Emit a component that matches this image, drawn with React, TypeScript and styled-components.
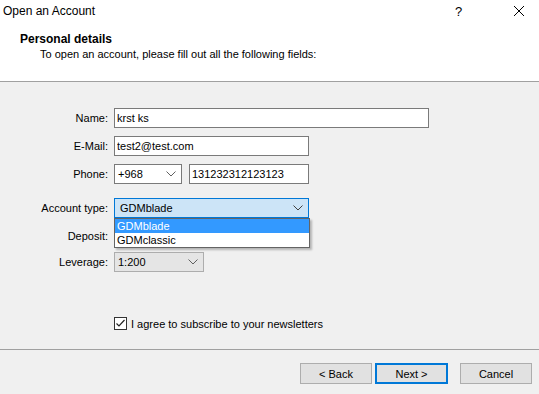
import styled, { createGlobalStyle } from "styled-components";

const Global = createGlobalStyle`
  html, body {
    margin: 0;
    padding: 0;
    background: #f0f0f0;
  }
  * { box-sizing: border-box; }
`;

const Chevron = ({ color = "#606060" }: { color?: string }) => (
  <svg width="10" height="6" viewBox="0 0 10 6">
    <path d="M0.5 0.5 L5 5 L9.5 0.5" fill="none" stroke={color} strokeWidth="1" />
  </svg>
);

export default function App() {
  return (
    <Window>
      <Global />
      <Header>
        <TitleBar>
          <WinTitle>Open an Account</WinTitle>
          <Help>?</Help>
          <Close>
            <svg width="12" height="12" viewBox="0 0 12 12">
              <path d="M1 1 L11 11 M11 1 L1 11" stroke="#000" strokeWidth="1" />
            </svg>
          </Close>
        </TitleBar>
        <Heading>Personal details</Heading>
        <Sub>To open an account, please fill out all the following fields:</Sub>
      </Header>

      <Form>
        <Row $space={0}>
          <Label>Name:</Label>
          <Input $w={315} defaultValue="krst ks" />
        </Row>
        <Row $space={8}>
          <Label>E-Mail:</Label>
          <Input $w={195} defaultValue="test2@test.com" />
        </Row>
        <Row $space={8}>
          <Label>Phone:</Label>
          <Combo $w={68}>
            <span>+968</span>
            <Chevron />
          </Combo>
          <Input $w={120} $gap={7} defaultValue="131232312123123" />
        </Row>
        <Row $space={14}>
          <Label>Account type:</Label>
          <ComboWrap>
            <Combo $w={195} $active>
              <span>GDMblade</span>
              <Chevron color="#404040" />
            </Combo>
            <DropList>
              <Option $selected>GDMblade</Option>
              <Option>GDMclassic</Option>
            </DropList>
          </ComboWrap>
        </Row>
        <Row $space={8}>
          <Label>Deposit:</Label>
          <Input $w={120} defaultValue="" />
        </Row>
        <Row $space={6}>
          <Label>Leverage:</Label>
          <Combo $w={90} $disabled>
            <span>1:200</span>
            <Chevron />
          </Combo>
        </Row>

        <CheckRow>
          <Box>
            <svg width="11" height="11" viewBox="0 0 11 11">
              <path d="M1.5 5.5 L4 8 L9.5 2" fill="none" stroke="#222" strokeWidth="1.2" />
            </svg>
          </Box>
          <CheckText>I agree to subscribe to your newsletters</CheckText>
        </CheckRow>
      </Form>

      <Footer>
        <Button>&lt; Back</Button>
        <Button $primary>Next &gt;</Button>
        <Button $gap={9}>Cancel</Button>
      </Footer>
    </Window>
  );
}

const Window = styled.div`
  width: 539px;
  height: 394px;
  display: flex;
  flex-direction: column;
  background: #f0f0f0;
  font-family: "Liberation Sans", Arial, sans-serif;
  font-size: 11px;
  color: #000;
  overflow: hidden;
`;

const Header = styled.div`
  height: 82px;
  background: #fff;
  border-bottom: 1px solid #a0a0a0;
  display: flex;
  flex-direction: column;
`;

const TitleBar = styled.div`
  height: 22px;
  display: flex;
  align-items: center;
  padding-left: 3px;
`;

const WinTitle = styled.div`
  flex: 1;
  font-size: 12px;
`;

const Help = styled.div`
  width: 58px;
  font-size: 13px;
`;

const Close = styled.div`
  width: 24px;
  display: flex;
  align-items: center;
  margin-right: 2px;
`;

const Heading = styled.div`
  margin-top: 10px;
  padding-left: 20px;
  font-weight: bold;
  font-size: 12px;
`;

const Sub = styled.div`
  margin-top: 2px;
  padding-left: 40px;
`;

const Form = styled.div`
  flex: 1;
  display: flex;
  flex-direction: column;
  padding-top: 26px;
  border-bottom: 1px solid #a0a0a0;
`;

const Row = styled.div<{ $space: number }>`
  display: flex;
  align-items: center;
  height: 20px;
  margin-top: ${(p) => p.$space}px;
`;

const Label = styled.div`
  width: 114px;
  padding-right: 6px;
  text-align: right;
`;

const Input = styled.input<{ $w: number; $gap?: number }>`
  width: ${(p) => p.$w}px;
  height: 20px;
  margin: 0 0 0 ${(p) => p.$gap ?? 0}px;
  border: 1px solid #7a7a7a;
  background: #fff;
  padding: 0 2px;
  font-family: inherit;
  font-size: 11px;
  color: #000;
  outline: none;
`;

const ComboWrap = styled.div`
  position: relative;
`;

const Combo = styled.div<{ $w: number; $active?: boolean; $disabled?: boolean }>`
  width: ${(p) => p.$w}px;
  height: 20px;
  display: flex;
  align-items: center;
  justify-content: space-between;
  padding: 0 5px 0 3px;
  border: 1px solid ${(p) => (p.$active ? "#0078d7" : p.$disabled ? "#adadad" : "#7a7a7a")};
  background: ${(p) => (p.$active ? "#cce4f7" : p.$disabled ? "#e5e5e5" : "#fff")};
  span {
    padding-left: ${(p) => (p.$active ? 2 : 0)}px;
  }
`;

const DropList = styled.div`
  position: absolute;
  top: 20px;
  left: 0;
  width: 196px;
  border: 1px solid #646464;
  background: #fff;
  box-shadow: 2px 2px 2px rgba(0, 0, 0, 0.25);
  z-index: 2;
`;

const Option = styled.div<{ $selected?: boolean }>`
  height: 14px;
  line-height: 14px;
  padding-left: 2px;
  background: ${(p) => (p.$selected ? "#3399ff" : "#fff")};
  color: ${(p) => (p.$selected ? "#fff" : "#000")};
`;

const CheckRow = styled.div`
  display: flex;
  align-items: center;
  margin-top: 45px;
  padding-left: 114px;
`;

const Box = styled.div`
  width: 13px;
  height: 13px;
  border: 1px solid #333;
  background: #fff;
  display: flex;
  align-items: center;
  justify-content: center;
`;

const CheckText = styled.div`
  margin-left: 4px;
`;

const Footer = styled.div`
  height: 44px;
  display: flex;
  align-items: flex-start;
  justify-content: flex-end;
  padding: 13px 7px 0 0;
  gap: 3px;
`;

const Button = styled.button<{ $primary?: boolean; $gap?: number }>`
  width: ${(p) => (p.$primary ? 73 : 72)}px;
  height: 21px;
  margin-left: ${(p) => p.$gap ?? 0}px;
  font-family: inherit;
  font-size: 11px;
  color: #000;
  background: #e1e1e1;
  border: ${(p) => (p.$primary ? "2px solid #0078d7" : "1px solid #adadad")};
  padding: 0;
`;
